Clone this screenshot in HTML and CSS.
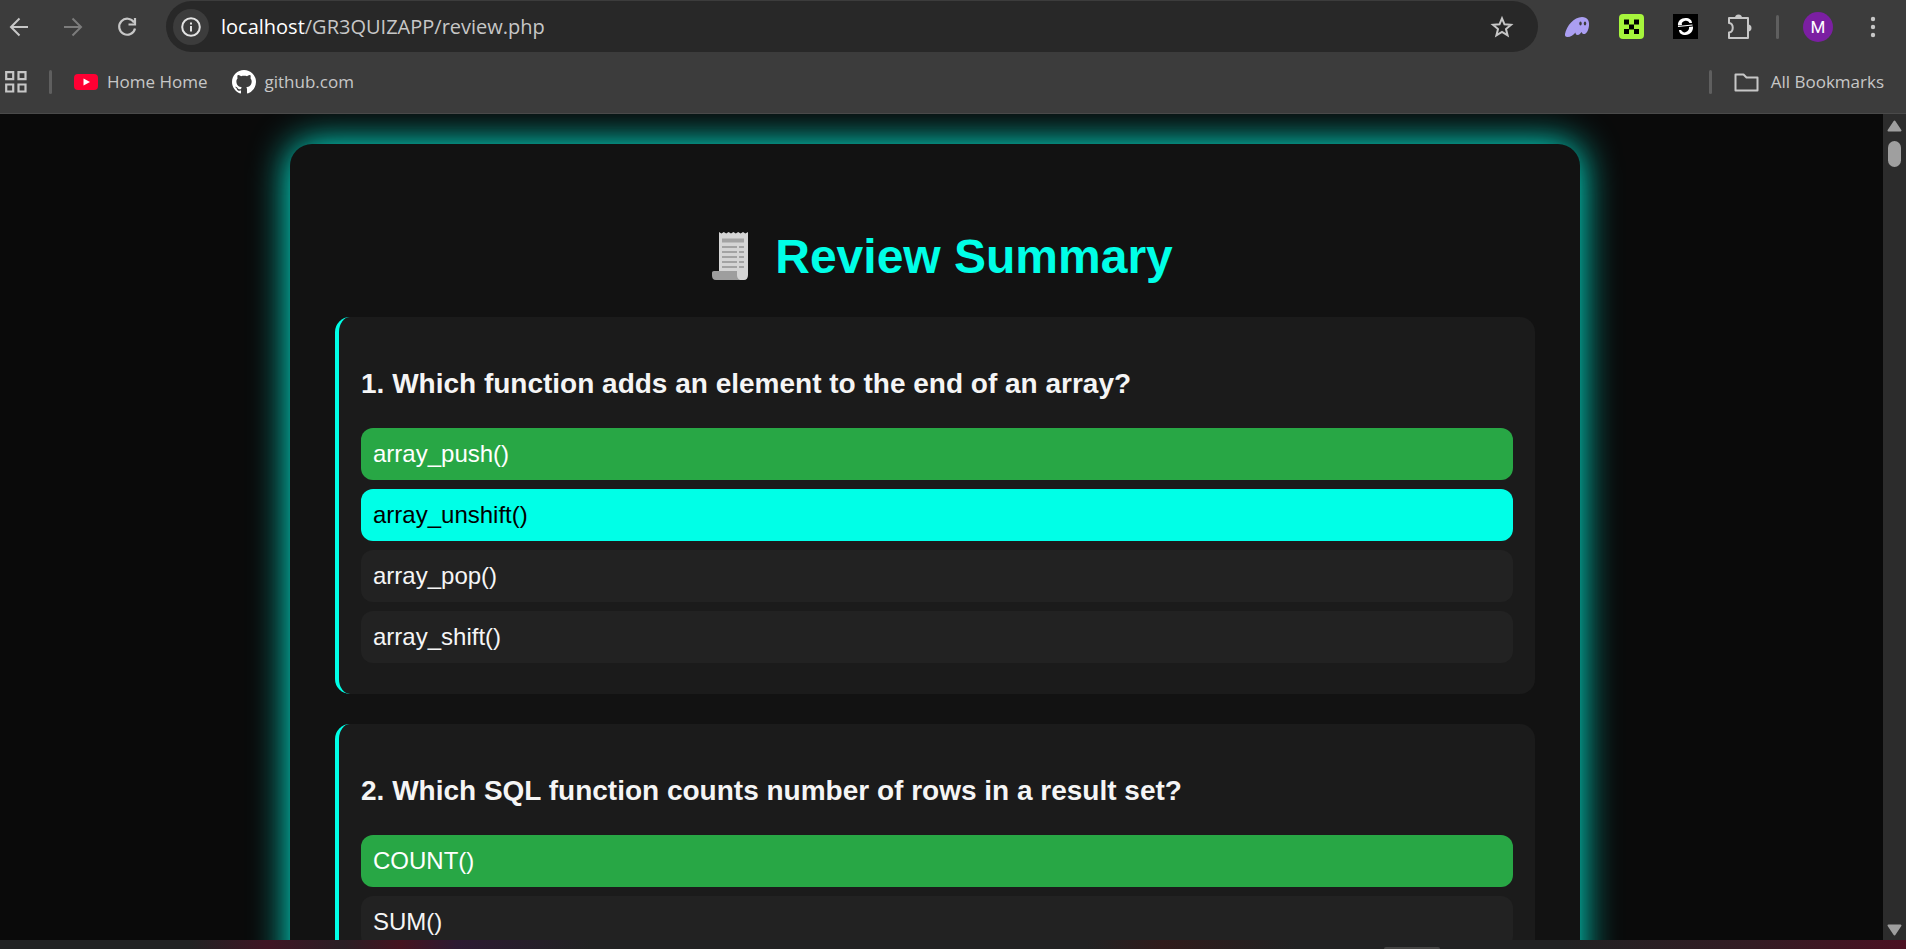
FILE: index.html
```html
<!DOCTYPE html>
<html lang="en">
<head>
<meta charset="utf-8">
<title>Review Summary</title>
<link rel="stylesheet" href="styles.css">
</head>
<body>
<header class="chrome">
  <nav class="toolbar" aria-label="Browser toolbar">
    <button class="tool" aria-label="Back"><svg width="20" height="20" viewBox="0 0 20 20" fill="none" stroke="#c7c7c7" stroke-width="2"><path d="M19 10H2M10.500 1.500 2 10l8.500 8.500"/></svg></button>
    <button class="tool" aria-label="Forward"><svg width="20" height="20" viewBox="0 0 20 20" fill="none" stroke="#7c7c7c" stroke-width="2"><path d="M1 10h17M9.500 1.500 18 10l-8.500 8.500"/></svg></button>
    <button class="tool" aria-label="Reload"><svg width="20" height="20" viewBox="0 0 20 20" fill="none" stroke="#c7c7c7" stroke-width="2.200"><path d="M17 5.500A8 8 0 1 0 18 11.500M18 1v6.500h-6.500"/></svg></button>
    <div class="address">
      <button class="site-info" aria-label="Site information"><svg width="20" height="20" viewBox="0 0 20 20" fill="none" stroke="#e3e3e3" stroke-width="2"><circle cx="10" cy="10" r="8.800"/><path d="M10 9v5.500M10 5.500v2"/></svg></button>
      <div class="url" role="textbox" aria-label="Address" tabindex="0"><span class="host">localhost</span>/GR3QUIZAPP/review.php</div>
      <button class="star" aria-label="Bookmark this tab"><svg width="24" height="24" viewBox="0 0 24 24" fill="none" stroke="#c7c7c7" stroke-width="2"><path d="m12 3.300 2.500 6 6.500.5-5 4.200 1.600 6.400L12 17l-5.600 3.400L8 14l-5-4.200 6.500-.5z"/></svg></button>
    </div>
    <div class="extensions">
      <button class="tool" aria-label="Phantom"><svg width="26" height="22" viewBox="0 0 26 22"><path fill="#ab9ff2" d="M1 18C2.500 10 10 1 18 1c5.500 0 7.500 4 7 8.500C24.500 15 22 18.500 19.500 18c-1.500-.3-1.500-1.500-2-2-1 1.500-2 3-4 3-1.500 0-2-1-2-2.500C9.500 19 6.500 21 3.500 21 1.500 21 .7 20 1 18z"/><ellipse cx="16.500" cy="7.500" rx="1.200" ry="1.900" fill="#3c3c3c"/><ellipse cx="21" cy="7.500" rx="1.200" ry="1.900" fill="#3c3c3c"/></svg></button>
      <button class="tool" aria-label="Wallet"><svg width="25" height="25" viewBox="0 0 25 25"><rect width="25" height="25" rx="4" fill="#a6f53c"/><path d="M5 5.500h5v5H5zM15 5.500h5v5h-5zM10 10.500h5v5h-5zM5 15h5v5H5zM15 15h5v5h-5z"/></svg></button>
      <button class="tool" aria-label="Extension"><svg width="25" height="25" viewBox="0 0 25 25"><path d="M0 0h25v25H0z"/><path fill="#fff" d="M5 11.500C4.500 7 8 4 12.500 4c4 0 6.500 2 6.500 5h-2.500c-1-2-3-2.800-5-2-2.500.8-3.200 2.500-2.500 4zM20 12.500c.5 4.500-3 8.500-7.500 8.500C8.500 21 6 19 6 16h2c1.500 2 3 3 5 2 2.500-1 3.500-3.500 3-5z"/><path stroke="#fff" stroke-width="1.200" d="M5 12.500l14.500-1.500"/></svg></button>
      <button class="tool" aria-label="Extensions"><svg width="25" height="26" viewBox="0 0 25 26"><path fill="none" stroke="#c7c7c7" stroke-width="2" stroke-linejoin="round" d="M2 4h19v20H2v-5.500c5-.5 5-9 0-9.500z"/><path fill="#c7c7c7" d="M8 4a3.500 3.500 0 0 1 7 0zM21 10.500a3.500 3.500 0 0 1 0 7z"/></svg></button>
    </div>
    <span class="divider"></span>
    <button class="avatar" aria-label="Profile">M</button>
    <button class="tool" aria-label="Menu"><svg width="6" height="22" viewBox="0 0 6 22" fill="#c7c7c7"><circle cx="3" cy="3" r="2.200"/><circle cx="3" cy="11" r="2.200"/><circle cx="3" cy="19" r="2.200"/></svg></button>
  </nav>
  <nav class="bookmarks" aria-label="Bookmarks">
    <button class="tool apps" aria-label="Apps"><svg width="22" height="22" viewBox="0 0 22 22" fill="none" stroke="#c7c7c7" stroke-width="2.200"><path d="M1.200 1.200h7v7h-7zM13.500 1.200h7v7h-7zM1.200 13.500h7v7h-7zM13.500 13.500h7v7h-7z"/></svg></button>
    <span class="divider"></span>
    <a class="bookmark" href="#"><svg width="24" height="16" viewBox="0 0 24 16"><rect width="24" height="16" rx="4" fill="#f03"/><path fill="#fff" d="m9.500 4.500 6.500 3.500-6.500 3.500z"/></svg>Home Home</a>
    <a class="bookmark" href="#"><svg width="24" height="24" viewBox="0 0 16 16"><path fill="#fff" d="M8 0C3.580 0 0 3.580 0 8c0 3.540 2.290 6.530 5.470 7.590.4.070.55-.17.55-.38 0-.19-.01-.82-.01-1.490-2.010.37-2.530-.49-2.690-.94-.09-.23-.48-.94-.82-1.130-.28-.15-.68-.52-.01-.53.63-.01 1.080.58 1.230.82.72 1.210 1.870.87 2.330.66.070-.52.28-.87.51-1.070-1.780-.2-3.640-.89-3.640-3.950 0-.87.31-1.590.82-2.150-.08-.2-.36-1.020.08-2.120 0 0 .67-.21 2.200.82.640-.18 1.320-.27 2-.27s1.360.09 2 .27c1.530-1.040 2.200-.82 2.200-.82.440 1.100.160 1.920.080 2.120.510.560.820 1.270.820 2.150 0 3.070-1.870 3.750-3.650 3.950.290.250.540.730.540 1.480 0 1.070-.010 1.930-.010 2.200 0 .210.150.460.550.380A8.010 8.010 0 0 0 16 8c0-4.420-3.580-8-8-8z"/></svg>github.com</a>
    <span class="spacer"></span>
    <span class="divider"></span>
    <button class="bookmark all"><svg width="25" height="19" viewBox="0 0 25 19" fill="none" stroke="#c7c7c7" stroke-width="2" stroke-linejoin="round"><path d="M1.500 1.500h8l3 3h11v13h-22z"/></svg>All Bookmarks</button>
  </nav>
</header>
<div class="window">
  <main class="page">
    <section class="review">
      <h1 class="title"><svg class="receipt" width="66" height="52" viewBox="0 0 66 52"><path fill="#d5d5d5" d="M22 1l2.400 1.500L26.800 1l2.400 1.500L31.600 1 34 2.500 36.400 1l2.400 1.500L41.200 1l2.400 1.500L46 1l2.400 1.500L51 1v43c0 3-1.500 5-4 5H22z"/><path fill="#9e9e9e" d="M17 40h23v4c0 2.500 1.500 5 4 5H19c-3 0-4-2-4-4.500V42c0-1.300.7-2 2-2z"/><path stroke="#a3a3a3" stroke-width="4" d="M25 9.500H47"/><path stroke="#a3a3a3" stroke-width="2" d="M25 16H40M42 16H47M25 21H40M42 21H47M25 26H40M42 26H47M25 31H40M42 31H47M25 36H40M42 36H47"/></svg> Review Summary</h1>
      <article class="question">
        <h3 class="prompt">1. Which function adds an element to the end of an array?</h3>
        <ul class="options">
          <li class="option correct">array_push()</li>
          <li class="option chosen">array_unshift()</li>
          <li class="option">array_pop()</li>
          <li class="option">array_shift()</li>
        </ul>
      </article>
      <article class="question">
        <h3 class="prompt">2. Which SQL function counts number of rows in a result set?</h3>
        <ul class="options">
          <li class="option correct">COUNT()</li>
          <li class="option">SUM()</li>
        </ul>
      </article>
    </section>
  </main>
  <div class="scrollbar" aria-hidden="true">
    <svg width="15" height="12" viewBox="0 0 15 12" fill="#9f9f9f" stroke="#9f9f9f" stroke-width="2" stroke-linejoin="round"><path d="M7.500 1.500 13.500 10.500h-12z"/></svg>
    <span class="thumb"></span>
    <svg width="15" height="12" viewBox="0 0 15 12" fill="#9f9f9f" stroke="#9f9f9f" stroke-width="2" stroke-linejoin="round"><path d="M7.500 10.500 13.500 1.500h-12z"/></svg>
  </div>
</div>
<footer class="taskbar"><span class="task"></span></footer>
</body>
</html>
```
FILE: styles.css
```css
* { box-sizing: border-box; }
body {
  margin: 0;
  height: 100vh;
  display: flex;
  flex-direction: column;
  overflow: hidden;
  background: #0a0a0a;
  color: #f5f5f5;
  font-family: "Liberation Sans", Arial, sans-serif;
}
button {
  border: 0;
  padding: 0;
  background: none;
  color: inherit;
  font: inherit;
}
svg { display: block; flex: none; }

.chrome {
  flex: none;
  background: #3c3c3c;
  border-bottom: 1px solid #4a4a4a;
  color: #c7c7c7;
  font-family: "Open Sans", "Noto Sans", sans-serif;
}
.toolbar {
  display: flex;
  align-items: center;
  height: 53px;
  gap: 34px;
  padding: 0 30px 0 9px;
}
.tool { display: flex; align-items: center; justify-content: center; }
.address {
  flex: 1;
  display: flex;
  align-items: center;
  height: 51px;
  margin-left: -5px;
  padding: 0 24px 0 7px;
  border-radius: 26px;
  background: #282828;
}
.site-info {
  display: flex;
  align-items: center;
  justify-content: center;
  width: 36px;
  height: 36px;
  border-radius: 50%;
  background: #3c3c3c;
}
.url { flex: 1; margin-left: 12px; font-size: 20px; line-height: 28px; }
.host { color: #fff; }
.extensions { display: flex; align-items: center; gap: 29px; margin-left: -8px; }
.divider { width: 3px; height: 24px; border-radius: 2px; background: #5f5f5f; }
.toolbar .divider { margin: 0 -10px; }
.avatar {
  width: 30px;
  height: 30px;
  margin-right: 3px;
  border-radius: 50%;
  background: #7b1fa2;
  color: #fff;
  font-family: Roboto, sans-serif;
  font-size: 17px;
}
.bookmarks {
  display: flex;
  align-items: center;
  height: 60px;
  gap: 22px;
  padding: 0 22px 2px 5px;
}
.bookmark {
  display: flex;
  align-items: center;
  gap: 9px;
  margin-right: 2px;
  color: #c7c7c7;
  font-size: 17px;
  line-height: 24px;
  text-decoration: none;
}
.all { gap: 12px; margin: 0; }
.spacer { flex: 1; }

.window { flex: 1; min-height: 0; display: flex; }
.page { flex: 1; min-width: 0; overflow: hidden; padding: 30px 43px 30px 30px; }
.review {
  max-width: 1290px;
  margin: 0 auto;
  padding: 45px;
  border-radius: 22px;
  background: #121212;
  box-shadow: 0 0 38px #00ffe7;
}
.title {
  display: flex;
  justify-content: center;
  align-items: center;
  gap: 12px;
  margin: 40px 0 33px;
  color: #00ffe7;
  font-size: 48px;
  line-height: 55px;
}
.question {
  margin-bottom: 30px;
  padding: 22px;
  border-left: 4px solid #00ffe7;
  border-radius: 15px;
  background: #1b1b1b;
}
.prompt { margin: 28px 0; font-size: 28px; line-height: 33px; }
.options { margin: 0; padding: 0; list-style: none; }
.option {
  margin-bottom: 9px;
  padding: 12px;
  border-radius: 12px;
  background: #222;
  font-size: 24px;
  line-height: 28px;
}
.correct { background: #28a745; color: #fff; }
.chosen { background: #00ffe7; color: #000; }

.scrollbar {
  flex: none;
  display: flex;
  flex-direction: column;
  align-items: center;
  gap: 9px;
  width: 23px;
  padding: 6px 0 4px;
  background: #2c2c2c;
}
.thumb { width: 13px; height: 26px; margin-bottom: auto; border-radius: 7px; background: #9f9f9f; }

.taskbar {
  flex: none;
  display: flex;
  align-items: flex-end;
  height: 9px;
  padding-left: 1384px;
  background: linear-gradient(90deg, #212223 0, #212223 10%, #3f1524 14%, #2a1f25 18%, #45131f 21%, #2c1a32 24%, #212223 31%, #212223 57%, #301b1b 61%, #212223 68%, #212223 82%, #331c24 92%, #4b1022 100%);
}
.task { width: 56px; height: 2px; border-radius: 2px 2px 0 0; background: #444; }
```
